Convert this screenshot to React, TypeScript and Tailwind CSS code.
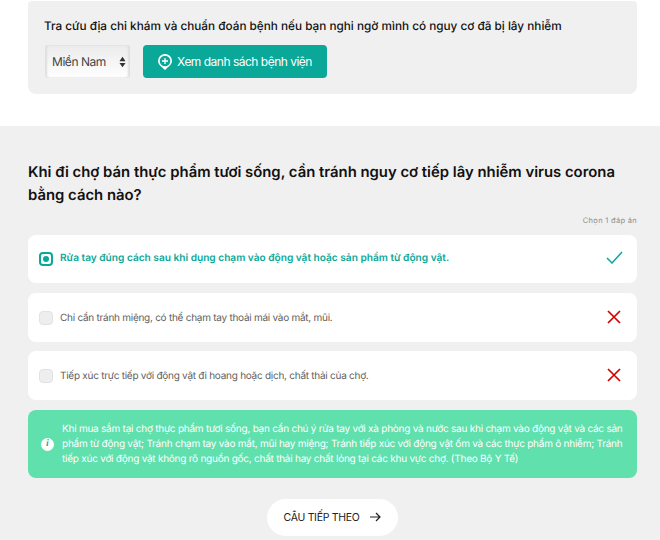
import React from "react";

const font = { fontFamily: "Inter, 'Noto Sans', sans-serif" };

function Wrong() {
  return (
    <svg width="14" height="14" viewBox="0 0 14 14" fill="none" stroke="#d40000" strokeWidth="1.7" className="mb-[2px] ml-[-1px] shrink-0">
      <path d="M1 1l12 12M13 1L1 13" />
    </svg>
  );
}

function Option({ text }: { text: string }) {
  return (
    <div className="flex h-[49px] items-center rounded-lg bg-white pl-[11px] pr-[16px]">
      <span className="h-[14px] w-[14px] rounded-[4px] border border-[#e2e2e2] bg-[#eeeeee]" />
      <span className="ml-[7px] flex-1 pt-[1px] text-[10px] tracking-[-0.26px] text-[#5f5f5f]">{text}</span>
      <Wrong />
    </div>
  );
}

export default function App() {
  return (
    <div className="h-[540px] w-[660px] overflow-hidden bg-white [text-rendering:geometricPrecision]" style={font}>
      <section className="h-[126px] pl-[28px] pr-[23px] pt-[1px]">
        <div className="h-[93px] rounded-b-lg rounded-t-sm bg-[#f0f0f0] pl-[16px] pt-[16px]">
          <p className="text-[11.75px] font-medium leading-[18px] text-[#111111]">
            Tra cứu địa chỉ khám và chuẩn đoán bệnh nếu bạn nghi ngờ mình có nguy cơ đã bị lây nhiễm
          </p>
          <div className="ml-[1px] mt-[10px] flex gap-[13px]">
            <div className="flex h-[33px] w-[85px] items-center justify-between rounded-[3px] bg-gradient-to-b from-[#ebebeb] to-white pl-[7px] pr-[4px] text-[12px] tracking-[-0.45px] text-[#444444] shadow-[inset_2px_0_2px_#dedede,inset_-2px_0_2px_#dedede]">
              Miền Nam
              <svg width="7" height="12" viewBox="0 0 8 12" fill="#333333"><path d="M4 0l3.500 5h-7zM4 12L.5 7h7z" /></svg>
            </div>
            <button className="flex h-[33px] w-[184px] items-center justify-center gap-[5px] rounded-[4px] bg-[#0aa899] text-[12px] tracking-[-0.5px] text-white">
              <svg width="14" height="16" viewBox="0 0 14 16" className="shrink-0">
                <path d="M7 0a7 7 0 0 1 7 7c0 3.600-4 6-7 9-3-3-7-5.400-7-9a7 7 0 0 1 7-7z" fill="white" />
                <circle cx="7" cy="7" r="5.300" fill="#0aa899" />
                <path d="M7 4v6M4 7h6" stroke="white" strokeWidth="1.300" />
              </svg>
              Xem danh sách bệnh viện
            </button>
          </div>
        </div>
      </section>

      <section className="h-[414px] bg-[#f0f0f0] pl-[28px] pr-[23px] pt-[35px]">
        <h2 className="text-[14.87px] font-semibold leading-[23px] text-[#111111]">
          Khi đi chợ bán thực phẩm tươi sống, cần tránh nguy cơ tiếp lây nhiễm virus corona bằng cách nào?
        </h2>
        <p className="mt-[8px] text-right text-[7.5px] leading-[12px] tracking-[0.3px] text-[#8e8e8e]">Chọn 1 đáp án</p>

        <div className="mt-[8px] flex flex-col">
          <div className="flex h-[48px] items-center rounded-lg bg-white pl-[11px] pr-[14px]">
            <span className="flex h-[14px] w-[14px] items-center justify-center rounded-[4px] border-2 border-[#0aa899]">
              <span className="h-[6px] w-[6px] rounded-full bg-[#0aa899]" />
            </span>
            <span className="ml-[7px] flex-1 text-[10.15px] font-semibold text-[#0aa899]">
              Rửa tay đúng cách sau khi dụng chạm vào động vật hoặc sản phẩm từ động vật.
            </span>
            <svg width="17" height="13" viewBox="0 0 17 13" fill="none" stroke="#0aa899" strokeWidth="1.500" className="mb-[3px] shrink-0">
              <path d="M1 7l5 5L16 1" />
            </svg>
          </div>
          <div className="mt-[10px] flex flex-col gap-[9px]">
            <Option text="Chỉ cần tránh miệng, có thể chạm tay thoải mái vào mắt, mũi." />
            <Option text="Tiếp xúc trực tiếp với động vật đi hoang hoặc dịch, chất thải của chợ." />
          </div>
        </div>

        <div className="mt-[10px] flex h-[68px] items-center rounded-lg bg-[#5fe0ad] pl-[13px] pr-[12px]">
          <span className="flex h-[13px] w-[13px] shrink-0 items-center justify-center rounded-full bg-white text-[10px] font-bold italic leading-none text-[#3f9f86]" style={{ fontFamily: "'Liberation Serif', serif" }}>i</span>
          <p className="ml-[8px] text-[10px] leading-[15px] tracking-[-0.24px] text-white">
            Khi mua sắm tại chợ thực phẩm tươi sống, bạn cần chú ý rửa tay với xà phòng và nước sau khi chạm vào động vật và các sản phẩm từ động vật; Tránh chạm tay vào mắt, mũi hay miệng; Tránh tiếp xúc với động vật ốm và các thực phẩm ô nhiễm; Tránh tiếp xúc với động vật không rõ nguồn gốc, chất thải hay chất lỏng tại các khu vực chợ. (Theo Bộ Y Tế)
          </p>
        </div>

        <div className="mt-[21px] flex justify-center">
          <button className="flex h-[37px] w-[131px] items-center justify-center gap-[11px] rounded-full bg-white text-[10.5px] tracking-[-0.3px] text-[#222222]">
            CÂU TIẾP THEO
            <svg width="11" height="10" viewBox="0 0 11 10" fill="none" stroke="#222222" strokeWidth="1.200" className="mb-[1px]"><path d="M0 5h10M6 1l4 4-4 4" /></svg>
          </button>
        </div>
      </section>
    </div>
  );
}
